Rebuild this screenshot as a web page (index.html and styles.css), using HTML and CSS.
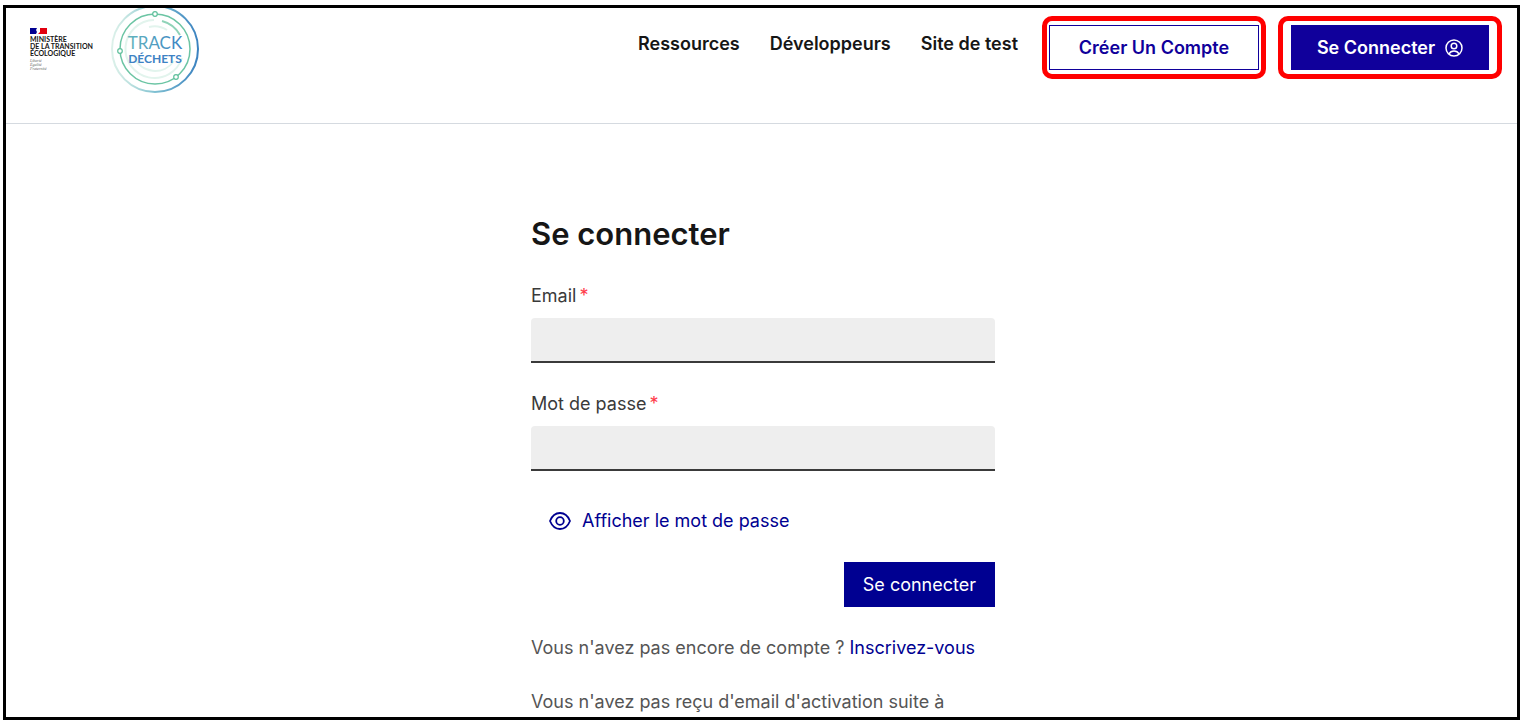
FILE: index.html
```
<!DOCTYPE html>
<html lang="fr">
<head>
  <meta charset="UTF-8">
  <meta name="viewport" content="width=device-width, initial-scale=1">
  <title>Se connecter - Trackdéchets</title>
  <link rel="stylesheet" href="styles.css">
</head>
<body>
  <div class="frame">
    <header class="header">
      <div class="brand">
        <div class="ministry">
          <svg class="flag" viewBox="0 0 17 6" aria-hidden="true">
            <path fill="#000091" d="M0 0h7l-1 2 1 2-1 2H0z"/>
            <path fill="#e1000f" d="M10 0h7v6H8l2-2z"/>
          </svg>
          <div class="ministry-name">MINISTÈRE<br>DE LA TRANSITION<br>ÉCOLOGIQUE</div>
          <div class="motto">Liberté<br>Égalité<br>Fraternité</div>
        </div>
        <svg class="logo" viewBox="0 5 90 85" role="img" aria-label="Trackdéchets">
          <defs>
            <linearGradient id="ring" x1="0" y1="0" x2="1" y2="0">
              <stop offset="0" stop-color="#a9dccb" stop-opacity=".4"/>
              <stop offset=".5" stop-color="#7fc0d2"/>
              <stop offset="1" stop-color="#3b82c0"/>
            </linearGradient>
            <linearGradient id="word" x1="0" y1="0" x2="1" y2="0">
              <stop offset="0" stop-color="#62b5bd"/>
              <stop offset="1" stop-color="#3d82c4"/>
            </linearGradient>
          </defs>
          <g fill="none">
            <circle cx="45" cy="46" r="43" stroke="url(#ring)" stroke-width="2"/>
            <circle cx="45" cy="46" r="35" stroke="#6cc5a4" stroke-width="1.5"/>
            <path stroke="#8fd3b8" stroke-width="2" d="M52 18a29 29 0 0 1 18 14"/>
            <path stroke="#e2f4ed" stroke-width="2" d="M44 17a29 29 0 1 0 28 38M39 24a23 23 0 0 1 18 3M24 54a23 23 0 0 0 40 4"/>
            <g fill="#fff" stroke="#5fc09c" stroke-width="1.2">
              <circle cx="45" cy="11" r="2.3"/>
              <circle cx="10" cy="48" r="2.3"/>
              <circle cx="66" cy="74" r="2.3"/>
            </g>
          </g>
          <text class="logo-track" x="45" y="46" text-anchor="middle" fill="url(#word)">TRACK</text>
          <text class="logo-dechets" x="45" y="60" text-anchor="middle">DÉCHETS</text>
        </svg>
      </div>

      <nav class="nav">
        <a href="#">Ressources</a>
        <a href="#">Développeurs</a>
        <a href="#">Site de test</a>
      </nav>

      <div class="actions">
        <div class="highlight">
          <a class="btn btn-outline" href="#">Créer Un Compte</a>
        </div>
        <div class="highlight highlight-wide">
          <a class="btn btn-solid" href="#">
            Se Connecter
            <svg class="user-icon" viewBox="0 0 18 18" fill="none" stroke="currentColor" stroke-width="1.5" aria-hidden="true">
              <circle cx="9" cy="9" r="8"/>
              <circle cx="9" cy="7" r="2.8"/>
              <path d="M4 15c1-2 3-3 5-3s4 1 5 3"/>
            </svg>
          </a>
        </div>
      </div>
    </header>

    <main class="main">
      <form class="login">
        <h1>Se connecter</h1>

        <div class="field">
          <label for="email">Email<span class="required">*</span></label>
          <input type="email" id="email" name="email">
        </div>

        <div class="field">
          <label for="password">Mot de passe<span class="required">*</span></label>
          <input type="password" id="password" name="password">
        </div>

        <button type="button" class="show-password">
          <svg class="eye-icon" viewBox="0 0 22 18" fill="none" stroke="currentColor" stroke-width="1.8" aria-hidden="true">
            <path d="M1 9c2-5 6-8 10-8s8 3 10 8c-2 5-6 8-10 8S3 14 1 9z"/>
            <circle cx="11" cy="9" r="3.8"/>
          </svg>
          Afficher le mot de passe
        </button>

        <button type="submit" class="submit">Se connecter</button>

        <p>Vous n'avez pas encore de compte ? <a href="#">Inscrivez-vous</a></p>
        <p>Vous n'avez pas reçu d'email d'activation suite à</p>
      </form>
    </main>
  </div>
</body>
</html>
```

FILE: styles.css
```
* {
  box-sizing: border-box;
}

body {
  margin: 0;
  padding: 5px 2px 4px 3px;
  height: 100vh;
  background-color: #fff;
  color: #3a3a3a;
  font-family: Inter, sans-serif;
  font-size: 18px;
  line-height: 24px;
}

a {
  color: #000091;
  text-decoration: none;
}

.frame {
  height: 100%;
  border: 3px solid #000;
  overflow: hidden;
}

/* header */
.header {
  display: flex;
  align-items: flex-start;
  height: 116px;
  padding: 0 15px 0 24px;
  border-bottom: 1px solid #d5dae0;
}

.brand {
  display: flex;
  margin-right: auto;
}

.ministry {
  width: 80px;
  padding-top: 20px;
  color: #161616;
  white-space: nowrap;
}

.flag {
  display: block;
  width: 17px;
  height: 6px;
  margin-bottom: 2px;
}

.ministry-name {
  font-family: Lato, sans-serif;
  font-size: 7px;
  font-weight: 700;
  line-height: 7px;
}

.motto {
  margin-top: 2px;
  color: #666;
  font-family: "Liberation Serif", serif;
  font-size: 4px;
  font-style: italic;
  line-height: 4px;
}

.logo {
  width: 90px;
  height: 85px;
}

.logo-track {
  font-family: Lato, sans-serif;
  font-size: 17px;
  font-weight: 400;
}

.logo-dechets {
  fill: #3d82c4;
  font-family: Lato, sans-serif;
  font-size: 12px;
  font-weight: 700;
}

.nav {
  display: flex;
  gap: 30px;
  padding: 24px 24px 0 0;
}

.nav a {
  color: #161616;
  font-weight: 600;
}

.actions {
  display: flex;
  gap: 12px;
  padding-top: 8px;
}

.highlight {
  width: 224px;
  padding: 4px 2px;
  border: 5px solid #f00;
  border-radius: 10px;
}

.highlight-wide {
  padding: 4px 8px;
}

.btn {
  display: flex;
  align-items: center;
  justify-content: center;
  gap: 10px;
  height: 45px;
  border: 1px solid #10009b;
  font-weight: 600;
}

.btn-outline {
  color: #10009b;
}

.btn-solid {
  background-color: #10009b;
  color: #fff;
}

.user-icon {
  width: 18px;
  height: 18px;
}

/* login form */
.main {
  padding: 88px 24px 0 27px;
}

.login {
  display: flex;
  flex-direction: column;
  max-width: 464px;
  margin: 0 auto;
}

h1 {
  margin: 0 0 28px;
  color: #161616;
  font-size: 31px;
  font-weight: 600;
  line-height: 44px;
}

.field {
  display: flex;
  flex-direction: column;
  gap: 10px;
  margin-bottom: 29px;
}

.required {
  margin-left: 3px;
  color: #ff3b4a;
}

.field input {
  width: 100%;
  height: 45px;
  padding: 8px 16px;
  border: 0;
  border-bottom: 2px solid #3a3a3a;
  border-radius: 4px 4px 0 0;
  background-color: #eee;
  font: inherit;
}

button {
  border: 0;
  font: inherit;
  cursor: pointer;
}

.show-password {
  display: flex;
  align-items: center;
  align-self: flex-start;
  gap: 11px;
  margin: 9px 0 29px;
  padding: 0 18px;
  background: none;
  color: #000091;
}

.eye-icon {
  width: 22px;
  height: 18px;
}

.submit {
  align-self: flex-end;
  height: 45px;
  margin-bottom: 29px;
  padding: 0 19px;
  background-color: #000091;
  color: #fff;
}

p {
  margin: 0 0 30px;
  color: #555;
  white-space: nowrap;
}
```
